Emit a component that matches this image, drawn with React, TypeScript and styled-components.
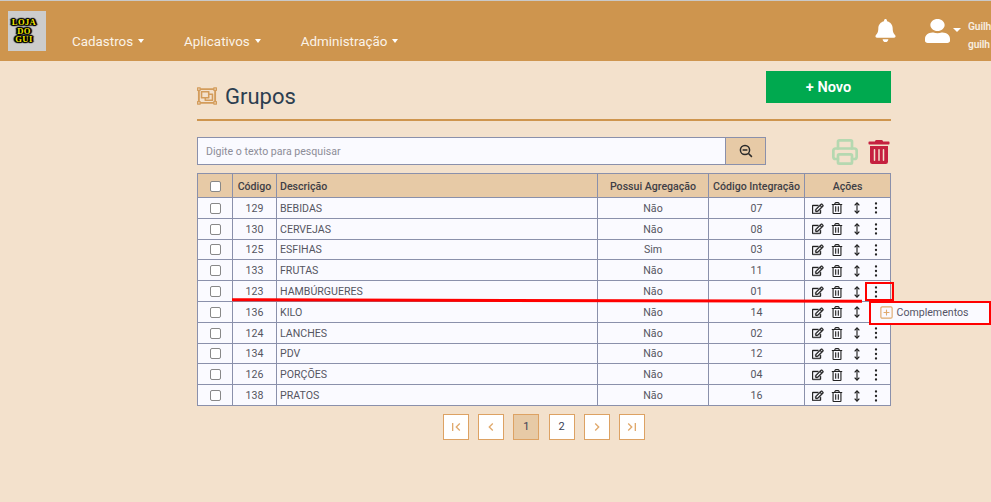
import React from "react";
import styled, { createGlobalStyle } from "styled-components";
import { FaBell, FaUser, FaRegEdit, FaRegTrashAlt, FaTrashAlt, FaRegObjectGroup } from "react-icons/fa";
import { MdFirstPage, MdLastPage, MdChevronLeft, MdChevronRight } from "react-icons/md";
import { LuPrinter, LuSquarePlus, LuMoveVertical } from "react-icons/lu";

const font = `Roboto, "Noto Sans", sans-serif`;

const Global = createGlobalStyle`
  html, body { margin: 0; padding: 0; width: 991px; height: 502px; overflow: hidden; background: #f3e1cc; font-family: ${font}; }
  * { box-sizing: border-box; }
`;

const Page = styled.div`
  position: relative;
  width: 991px;
  height: 502px;
  overflow: hidden;
  border-top: 1px solid #c9c9c9;
`;

const Header = styled.header`
  display: flex;
  height: 60px;
  background: #ce954e;
  color: #fff;
  padding-left: 8px;
`;

const Logo = styled.div`
  width: 38px;
  height: 40px;
  margin-top: 10px;
  padding-right: 6px;
  background: #cccccc;
  display: flex;
  flex-direction: column;
  align-items: center;
  justify-content: center;
  font: bold 8.5px/8.6px "Liberation Serif", serif;
  letter-spacing: 0.4px;
  color: #f2e600;
  text-shadow: 0 0 1px #000, 1px 0 1px #000, -1px 0 1px #000, 0 1px 1px #000, 0 -1px 1px #000, 1px 1px 1px #000, -1px -1px 1px #000, 1px -1px 1px #000, -1px 1px 1px #000, 2px 0 1px #000, -2px 0 1px #000;
`;

const Nav = styled.nav`
  display: flex;
  margin-left: 26px;
  margin-top: 30px;
  gap: 40px;
`;

const NavItem = styled.div`
  display: flex;
  align-items: center;
  height: 20px;
  font-size: 13.4px;
  gap: 5px;
  color: #fbf3e8;
`;

const Caret = styled.span`
  width: 0;
  height: 0;
  border-left: 3.5px solid transparent;
  border-right: 3.5px solid transparent;
  border-top: 4px solid #fff;
`;

const HeaderRight = styled.div`
  margin-left: auto;
  display: flex;
  width: 117px;
  flex: none;
  padding-top: 18px;
  svg { flex: none; }
`;

const UserArea = styled.div`
  display: flex;
  margin-left: 28px;
`;

const UserCaret = styled.div`
  margin: 9px 7px 0 3px;
  span { display: block; border-left-width: 4px; border-right-width: 4px; }
`;

const UserText = styled.div`
  margin-top: -1px;
  font-size: 10.2px;
  font-weight: 600;
  line-height: 18px;
  letter-spacing: -0.1px;
  color: #f8eee0;
`;

const Main = styled.main`
  width: 694px;
  margin-left: 197px;
`;

const TitleRow = styled.div`
  display: flex;
  justify-content: space-between;
  height: 60px;
  padding-top: 10px;
  border-bottom: 2px solid #ce954e;
`;

const Title = styled.h1`
  display: flex;
  align-items: center;
  gap: 8px;
  margin: 0;
  height: 50px;
  font-size: 22px;
  font-weight: 400;
  color: #2c3e50;
  svg { color: #d39c5b; }
`;

const NewButton = styled.button`
  width: 125px;
  height: 32px;
  border: 0;
  padding-top: 2px;
  background: #00a94f;
  color: #fff;
  font: 600 14.5px ${font};
`;

const SearchRow = styled.div`
  display: flex;
  align-items: center;
  margin-top: 16px;
  height: 28px;
`;

const SearchInput = styled.div`
  width: 528px;
  height: 28px;
  background: #fafaff;
  border: 1px solid #8a90ab;
  border-right: 0;
  padding-left: 8px;
  display: flex;
  align-items: center;
  font-size: 10.6px;
  color: #8d8d98;
`;

const SearchButton = styled.div`
  width: 41px;
  height: 28px;
  background: #e7caa6;
  border: 1px solid #8a90ab;
  display: flex;
  align-items: center;
  justify-content: center;
  color: #2a2a2a;
`;

const Tools = styled.div`
  display: flex;
  align-items: center;
  margin-left: auto;
  gap: 8.5px;
  padding-top: 1px;
`;

const Table = styled.table`
  width: 693px;
  margin-top: 8px;
  border-collapse: collapse;
  table-layout: fixed;
  font-size: 10.6px;
  color: #55555f;
`;

const Th = styled.th<{ $left?: boolean }>`
  height: 24px;
  padding: 2px 4px 0 ${(p) => (p.$left ? "3px" : "4px")};
  background: #e7caa6;
  border: 1px solid #8a90ab;
  font-weight: 500;
  color: #3f3f46;
  text-align: ${(p) => (p.$left ? "left" : "center")};
  white-space: nowrap;
`;

const Td = styled.td<{ $left?: boolean }>`
  height: 20.8px;
  padding: 1px 4px 0 ${(p) => (p.$left ? "3px" : "4px")};
  background: #fafaff;
  border: 1px solid #8a90ab;
  text-align: ${(p) => (p.$left ? "left" : "center")};
`;

const Box = styled.span`
  display: block;
  width: 11px;
  height: 11px;
  margin: 0 auto;
  background: #fff;
  border: 1px solid #888;
  border-radius: 2px;
`;

const Actions = styled.div`
  display: grid;
  grid-template-columns: repeat(4, 19.5px);
  justify-content: center;
  justify-items: center;
  align-items: center;
  color: #222;
  margin-left: -1px;
`;

const Pager = styled.div`
  display: flex;
  justify-content: center;
  margin-top: 8px;
  gap: 9.4px;
`;

const PageButton = styled.div<{ $active?: boolean; $icon?: boolean }>`
  width: 26px;
  height: 26px;
  display: flex;
  align-items: center;
  justify-content: center;
  border: 1px solid #dda263;
  background: ${(p) => (p.$active ? "#e7caa6" : "#fff")};
  color: ${(p) => (p.$icon ? "#e0a96c" : "#3a4055")};
  font-size: 11px;
`;

const RedLine = styled.div`
  position: absolute;
  left: 232px;
  top: 298px;
  width: 630px;
  height: 2.5px;
  background: #f00;
  transform: rotate(0.13deg);
`;

const RedDots = styled.div`
  position: absolute;
  left: 865px;
  top: 281px;
  width: 29px;
  height: 18.5px;
  border: 2.5px solid #f00;
`;

const Menu = styled.div`
  position: absolute;
  left: 869px;
  top: 300px;
  width: 122px;
  height: 23.5px;
  background: #fafaff;
  border: 2.5px solid #f00;
  display: flex;
  align-items: center;
  gap: 3px;
  padding-left: 7.5px;
  font-size: 10.6px;
  color: #555566;
  svg { color: #e0a96c; }
`;

const rows = [
  ["129", "BEBIDAS", "Não", "07"],
  ["130", "CERVEJAS", "Não", "08"],
  ["125", "ESFIHAS", "Sim", "03"],
  ["133", "FRUTAS", "Não", "11"],
  ["123", "HAMBÚRGUERES", "Não", "01"],
  ["136", "KILO", "Não", "14"],
  ["124", "LANCHES", "Não", "02"],
  ["134", "PDV", "Não", "12"],
  ["126", "PORÇÕES", "Não", "04"],
  ["138", "PRATOS", "Não", "16"],
];

const SearchIcon = () => (
  <svg width="14" height="14" viewBox="0 0 14 14" fill="none" stroke="currentColor" strokeWidth="1.5">
    <circle cx="6" cy="6" r="4.6" />
    <path d="M3.6 6h4.8M9.5 9.5l3.4 3.4" />
  </svg>
);

const DotsIcon = () => (
  <svg width="4" height="12" viewBox="0 0 4 12" fill="currentColor">
    <circle cx="2" cy="1.5" r="1.15" />
    <circle cx="2" cy="6" r="1.15" />
    <circle cx="2" cy="10.5" r="1.15" />
  </svg>
);

export default function App() {
  return (
    <Page>
      <Global />
      <Header>
        <Logo>
          <span>LOJA</span>
          <span>DO</span>
          <span>GUI</span>
        </Logo>
        <Nav>
          <NavItem>Cadastros <Caret /></NavItem>
          <NavItem>Aplicativos <Caret /></NavItem>
          <NavItem>Administração <Caret /></NavItem>
        </Nav>
        <HeaderRight>
          <FaBell size={23} />
          <UserArea>
            <FaUser size={24} preserveAspectRatio="none" style={{ width: 25 }} />
            <UserCaret><Caret /></UserCaret>
            <UserText>Guilh<br />guilh</UserText>
          </UserArea>
        </HeaderRight>
      </Header>
      <Main>
        <TitleRow>
          <Title><FaRegObjectGroup size={20} />Grupos</Title>
          <NewButton>+ Novo</NewButton>
        </TitleRow>
        <SearchRow>
          <SearchInput>Digite o texto para pesquisar</SearchInput>
          <SearchButton><SearchIcon /></SearchButton>
          <Tools>
            <LuPrinter size={28} strokeWidth={2.3} color="#b5d8b0" />
            <FaTrashAlt size={24} color="#c5203f" />
          </Tools>
        </SearchRow>
        <Table>
          <colgroup>
            <col width="35" /><col width="44" /><col width="321" /><col width="111" /><col width="96" /><col width="86" />
          </colgroup>
          <thead>
            <tr>
              <Th><Box /></Th>
              <Th>Código</Th>
              <Th $left>Descrição</Th>
              <Th>Possui Agregação</Th>
              <Th>Código Integração</Th>
              <Th>Ações</Th>
            </tr>
          </thead>
          <tbody>
            {rows.map((r) => (
              <tr key={r[0]}>
                <Td><Box /></Td>
                <Td>{r[0]}</Td>
                <Td $left>{r[1]}</Td>
                <Td>{r[2]}</Td>
                <Td>{r[3]}</Td>
                <Td>
                  <Actions>
                    <FaRegEdit size={11.5} stroke="currentColor" strokeWidth={20} />
                    <FaRegTrashAlt size={12} />
                    <LuMoveVertical size={12} strokeWidth={2.3} />
                    <DotsIcon />
                  </Actions>
                </Td>
              </tr>
            ))}
          </tbody>
        </Table>
        <Pager>
          <PageButton $icon><MdFirstPage size={16} /></PageButton>
          <PageButton $icon><MdChevronLeft size={16} /></PageButton>
          <PageButton $active>1</PageButton>
          <PageButton>2</PageButton>
          <PageButton $icon><MdChevronRight size={16} /></PageButton>
          <PageButton $icon><MdLastPage size={16} /></PageButton>
        </Pager>
      </Main>
      <RedLine />
      <RedDots />
      <Menu><LuSquarePlus size={15} strokeWidth={1.8} />Complementos</Menu>
    </Page>
  );
}
